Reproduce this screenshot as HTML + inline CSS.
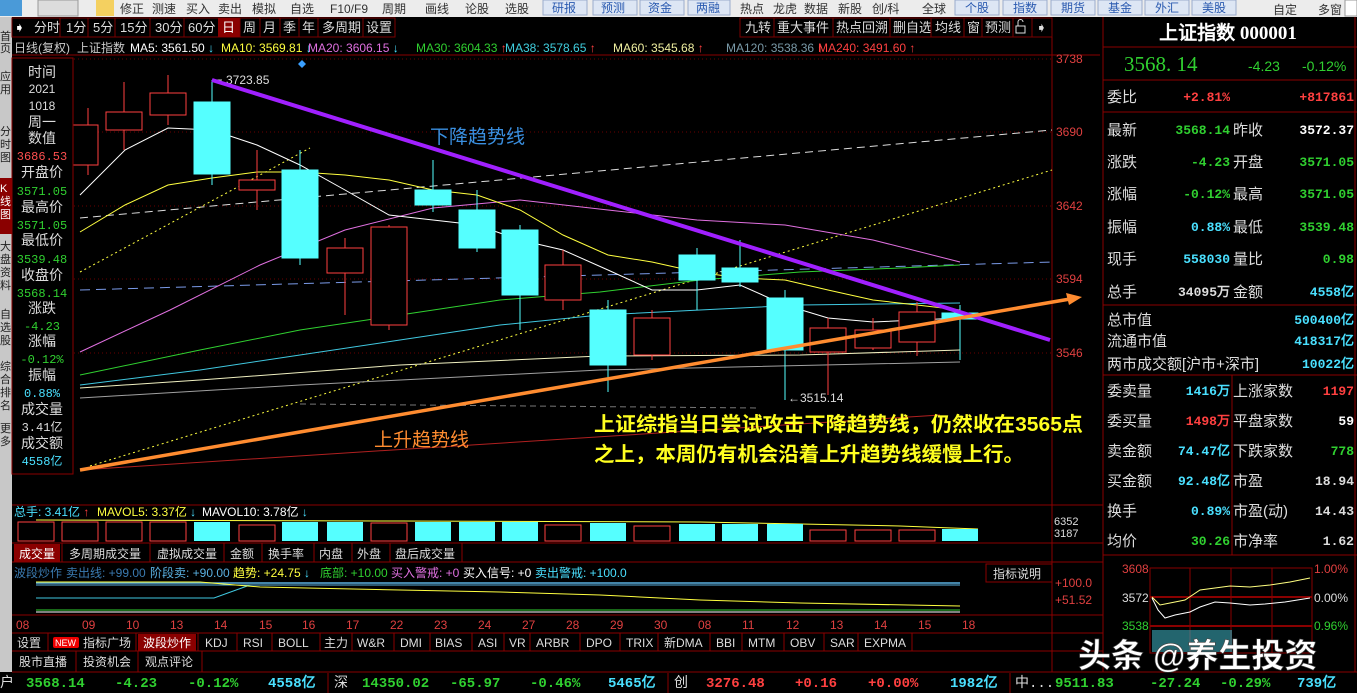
<!DOCTYPE html>
<html><head><meta charset="utf-8"><style>
html,body{margin:0;padding:0;background:#000;width:1357px;height:693px;overflow:hidden}
svg{display:block}
.m{font-family:"Liberation Mono","WenQuanYi Zen Hei",monospace}
</style></head><body>
<svg width="1357" height="693" viewBox="0 0 1357 693" xmlns="http://www.w3.org/2000/svg" font-family="Liberation Sans, WenQuanYi Zen Hei, Noto Sans CJK SC, sans-serif" font-size="12">
<!-- toolbar -->
<rect x="0" y="0" width="1357" height="17" fill="#ececec"/>
<rect x="0" y="0" width="22" height="16" fill="#4a9ad8"/>
<rect x="38" y="0" width="40" height="16" fill="#dcdcdc" stroke="#999"/>
<rect x="96" y="0" width="18" height="16" fill="#f4d060"/>
<g fill="#333" font-size="12">
<text x="120" y="13">修正</text><text x="152" y="13">测速</text><text x="186" y="13">买入</text><text x="218" y="13">卖出</text><text x="252" y="13">模拟</text><text x="290" y="13">自选</text><text x="330" y="13">F10/F9</text><text x="382" y="13">周期</text><text x="425" y="13">画线</text><text x="465" y="13">论股</text><text x="505" y="13">选股</text>
<text x="740" y="13">热点</text><text x="773" y="13">龙虎</text><text x="804" y="13">数据</text><text x="838" y="13">新股</text><text x="872" y="13">创/科</text><text x="922" y="13">全球</text><text x="1273" y="14">自定</text><text x="1318" y="14">多窗</text>
</g>
<g fill="#dde6f4" stroke="#9aaccc">
<rect x="543" y="0" width="44" height="15"/><rect x="593" y="0" width="44" height="15"/><rect x="640" y="0" width="44" height="15"/><rect x="688" y="0" width="42" height="15"/>
<rect x="955" y="0" width="44" height="15"/><rect x="1003" y="0" width="44" height="15"/><rect x="1051" y="0" width="44" height="15"/><rect x="1098" y="0" width="44" height="15"/><rect x="1145" y="0" width="44" height="15"/><rect x="1192" y="0" width="44" height="15"/>
</g>
<g fill="#2a5ab0"><text x="552" y="12">研报</text><text x="601" y="12">预测</text><text x="648" y="12">资金</text><text x="696" y="12">两融</text><text x="965" y="12">个股</text><text x="1013" y="12">指数</text><text x="1061" y="12">期货</text><text x="1108" y="12">基金</text><text x="1155" y="12">外汇</text><text x="1202" y="12">美股</text></g>
<rect x="1345" y="0" width="12" height="16" fill="#fff" stroke="#999"/>

<!-- left sidebar -->
<rect x="0" y="17" width="12" height="655" fill="#c8c8c8"/>
<rect x="0" y="178" width="12" height="56" fill="#8a0000"/>
<g font-size="11" fill="#222">
<text x="0" y="40">首</text><text x="0" y="52">页</text>
<text x="0" y="80">应</text><text x="0" y="93">用</text>
<text x="0" y="135">分</text><text x="0" y="148">时</text><text x="0" y="161">图</text>
<text x="0" y="192" fill="#fff">K</text><text x="0" y="205" fill="#fff">线</text><text x="0" y="218" fill="#fff">图</text>
<text x="0" y="250">大</text><text x="0" y="263">盘</text><text x="0" y="276">资</text><text x="0" y="289">料</text>
<text x="0" y="318">自</text><text x="0" y="331">选</text><text x="0" y="344">股</text>
<text x="0" y="370">综</text><text x="0" y="383">合</text><text x="0" y="396">排</text><text x="0" y="409">名</text>
<text x="0" y="432">更</text><text x="0" y="445">多</text>
</g>

<!-- period tabs -->
<g stroke="#7a0000" fill="none">
<rect x="12" y="18" width="383" height="19"/><rect x="740" y="18" width="312" height="19"/>
</g>
<rect x="218" y="18" width="22" height="19" fill="#8a0000"/>
<g fill="#ddd" font-size="13">
<text x="14" y="32" fill="#fff">➧</text>
<text x="34" y="32">分时</text><text x="66" y="32">1分</text><text x="93" y="32">5分</text><text x="120" y="32">15分</text><text x="155" y="32">30分</text><text x="188" y="32">60分</text><text x="222" y="32" fill="#fff">日</text><text x="243" y="32">周</text><text x="263" y="32">月</text><text x="283" y="32">季</text><text x="302" y="32">年</text><text x="322" y="32">多周期</text><text x="366" y="32">设置</text>
<text x="745" y="32">九转</text><text x="777" y="32">重大事件</text><text x="836" y="32">热点回溯</text><text x="893" y="32">删自选</text><text x="935" y="32">均线</text><text x="967" y="32">窗</text><text x="985" y="32">预测</text><text x="1036" y="32">➧</text>
</g>
<g fill="none" stroke="#ddd"><rect x="1016" y="26" width="9" height="7"/><path d="M1018 26 V22 a2.5 2.5 0 0 1 5 0"/></g>
<g stroke="#7a0000"><line x1="60" y1="18" x2="60" y2="37"/><line x1="88" y1="18" x2="88" y2="37"/><line x1="115" y1="18" x2="115" y2="37"/><line x1="150" y1="18" x2="150" y2="37"/><line x1="184" y1="18" x2="184" y2="37"/><line x1="240" y1="18" x2="240" y2="37"/><line x1="260" y1="18" x2="260" y2="37"/><line x1="280" y1="18" x2="280" y2="37"/><line x1="299" y1="18" x2="299" y2="37"/><line x1="318" y1="18" x2="318" y2="37"/><line x1="363" y1="18" x2="363" y2="37"/><line x1="774" y1="18" x2="774" y2="37"/><line x1="833" y1="18" x2="833" y2="37"/><line x1="890" y1="18" x2="890" y2="37"/><line x1="931" y1="18" x2="931" y2="37"/><line x1="964" y1="18" x2="964" y2="37"/><line x1="982" y1="18" x2="982" y2="37"/><line x1="1013" y1="18" x2="1013" y2="37"/><line x1="1032" y1="18" x2="1032" y2="37"/></g>

<!-- MA legend -->
<g font-size="12">
<text x="14" y="52" fill="#ccc">日线(复权)</text><text x="77" y="52" fill="#ccc">上证指数</text>
<text x="130" y="52" fill="#fff">MA5: 3561.50 <tspan fill="#4ae0ff">↓</tspan></text>
<text x="221" y="52" fill="#ffff40">MA10: 3569.81 <tspan fill="#4ae0ff">↓</tspan></text>
<text x="308" y="52" fill="#e070e0">MA20: 3606.15 <tspan fill="#4ae0ff">↓</tspan></text>
<text x="416" y="52" fill="#30d030">MA30: 3604.33 <tspan fill="#ff4040">↑</tspan></text>
<text x="505" y="52" fill="#40d0e0">MA38: 3578.65 <tspan fill="#ff4040">↑</tspan></text>
<text x="613" y="52" fill="#f0f0a0">MA60: 3545.68 <tspan fill="#ff4040">↑</tspan></text>
<text x="726" y="52" fill="#7a9aa8">MA120: 3538.36 <tspan fill="#ff4040">↑</tspan></text>
<text x="818" y="52" fill="#ff4040">MA240: 3491.60 ↑</text>
</g>
<polygon points="302,60 306,64 302,68 298,64" fill="#3aa0ff"/>

<!-- chart frame -->
<g stroke="#8a0000" fill="none">
<line x1="12" y1="55" x2="1100" y2="55"/>
<line x1="1052" y1="37" x2="1052" y2="672"/>
<line x1="1103" y1="17" x2="1103" y2="672"/>
<line x1="12" y1="505" x2="1103" y2="505"/>
<line x1="12" y1="543" x2="1103" y2="543"/>
<line x1="12" y1="562" x2="1103" y2="562"/>
<line x1="12" y1="615" x2="1103" y2="615"/>
<line x1="12" y1="633" x2="1103" y2="633"/>
<line x1="12" y1="651" x2="1103" y2="651"/>
<line x1="12" y1="672" x2="1357" y2="672"/>
</g>
<g stroke="#6a0000" stroke-dasharray="1,3">
<line x1="14" y1="59" x2="1052" y2="59"/><line x1="14" y1="132" x2="1052" y2="132"/><line x1="14" y1="206" x2="1052" y2="206"/><line x1="14" y1="279" x2="1052" y2="279"/><line x1="14" y1="353" x2="1052" y2="353"/>
</g>
<g fill="#e04040" font-size="12"><text x="1056" y="63">3738</text><text x="1056" y="136">3690</text><text x="1056" y="210">3642</text><text x="1056" y="283">3594</text><text x="1056" y="357">3546</text></g>

<!-- dashed trend lines -->
<line x1="80" y1="218" x2="1052" y2="130" stroke="#ddd" stroke-dasharray="8,5"/>
<line x1="80" y1="290" x2="1052" y2="262" stroke="#7a9ae8" stroke-dasharray="10,6"/>
<line x1="90" y1="466" x2="1052" y2="170" stroke="#ffff40" stroke-dasharray="2,3"/>
<line x1="80" y1="272" x2="310" y2="148" stroke="#ffff40" stroke-dasharray="2,3"/>
<line x1="300" y1="404" x2="760" y2="408" stroke="#777" stroke-dasharray="6,4"/>
<line x1="80" y1="470" x2="940" y2="415" stroke="#b02020"/>

<!-- MA lines -->
<polyline fill="none" stroke="#a0a0a0" points="80,398 300,385 600,370 960,362"/>
<polyline fill="none" stroke="#f0f0c0" points="80,388 200,380 400,365 600,356 800,355 960,350"/>
<polyline fill="none" stroke="#40c8e0" points="80,385 200,370 300,355 400,340 500,325 600,315 700,310 800,305 960,303"/>
<polyline fill="none" stroke="#30d030" points="80,375 200,350 300,330 400,315 500,300 600,292 700,280 800,272 900,268 960,265"/>
<polyline fill="none" stroke="#e070e0" points="80,352 170,310 260,265 345,230 433,208 520,200 608,210 697,220 785,225 873,240 960,262"/>
<polyline fill="none" stroke="#ffff40" points="80,232 125,205 168,185 212,178 257,172 300,172 345,175 389,180 433,190 477,195 520,210 563,235 608,255 652,262 697,272 740,278 785,280 828,290 873,300 917,305 960,310"/>
<polyline fill="none" stroke="#fff" points="80,195 125,150 168,128 212,130 257,145 300,165 345,190 389,215 433,220 477,225 520,240 563,250 608,270 652,290 697,290 740,285 785,305 828,318 873,322 917,320 960,318"/>

<!-- candles -->
<g stroke="#ff4040" fill="#000">
<line x1="88" y1="108" x2="88" y2="175"/><rect x="70" y="125" width="28" height="40"/>
<line x1="124" y1="82" x2="124" y2="150"/><rect x="106" y="112" width="36" height="18"/>
<line x1="168" y1="75" x2="168" y2="125"/><rect x="150" y="93" width="36" height="22"/>
<line x1="257" y1="150" x2="257" y2="210"/><rect x="239" y="180" width="36" height="10"/>
<line x1="345" y1="238" x2="345" y2="315"/><rect x="327" y="248" width="36" height="25"/>
<line x1="389" y1="225" x2="389" y2="330"/><rect x="371" y="227" width="36" height="98"/>
<line x1="563" y1="250" x2="563" y2="310"/><rect x="545" y="265" width="36" height="35"/>
<line x1="652" y1="310" x2="652" y2="360"/><rect x="634" y="318" width="36" height="37"/>
<line x1="828" y1="318" x2="828" y2="395"/><rect x="810" y="328" width="36" height="24"/>
<line x1="873" y1="318" x2="873" y2="350"/><rect x="855" y="330" width="36" height="18"/>
<line x1="917" y1="302" x2="917" y2="356"/><rect x="899" y="312" width="36" height="30"/>
</g>
<g stroke="#5ff" fill="#5ff">
<line x1="212" y1="80" x2="212" y2="185"/><rect x="194" y="102" width="36" height="72"/>
<line x1="300" y1="150" x2="300" y2="265"/><rect x="282" y="170" width="36" height="88"/>
<line x1="433" y1="160" x2="433" y2="212"/><rect x="415" y="190" width="36" height="15"/>
<line x1="477" y1="190" x2="477" y2="252"/><rect x="459" y="210" width="36" height="38"/>
<line x1="520" y1="225" x2="520" y2="330"/><rect x="502" y="230" width="36" height="65"/>
<line x1="608" y1="300" x2="608" y2="392"/><rect x="590" y="310" width="36" height="55"/>
<line x1="697" y1="248" x2="697" y2="310"/><rect x="679" y="255" width="36" height="25"/>
<line x1="740" y1="240" x2="740" y2="287"/><rect x="722" y="268" width="36" height="14"/>
<line x1="785" y1="290" x2="785" y2="400"/><rect x="767" y="298" width="36" height="52"/>
<line x1="960" y1="305" x2="960" y2="360"/><rect x="942" y="313" width="36" height="6"/>
</g>
<line x1="212" y1="80" x2="222" y2="80" stroke="#ccc"/>
<text x="226" y="84" fill="#ddd" font-size="12">3723.85</text>
<text x="788" y="402" fill="#ddd" font-size="12">←3515.14</text>

<!-- main trend lines -->
<line x1="212" y1="80" x2="1050" y2="340" stroke="#a020ff" stroke-width="4"/>
<line x1="80" y1="470" x2="1070" y2="299" stroke="#ff8c30" stroke-width="3.5"/>
<polygon points="1082,297 1066,293 1069,305" fill="#ff8c30"/>
<text x="430" y="143" fill="#3a8fe0" font-size="19">下降趋势线</text>
<text x="374" y="446" fill="#ff8c30" font-size="19">上升趋势线</text>
<text x="594" y="431" fill="#ffff20" font-size="20" font-weight="bold" textLength="489" lengthAdjust="spacingAndGlyphs">上证综指当日尝试攻击下降趋势线，仍然收在3565点</text>
<text x="594" y="461" fill="#ffff20" font-size="20" font-weight="bold" textLength="430" lengthAdjust="spacingAndGlyphs">之上，本周仍有机会沿着上升趋势线缓慢上行。</text>

<!-- left info box -->
<rect x="12" y="58" width="61" height="416" fill="#000" stroke="#8a0000"/>
<g font-size="14" text-anchor="middle" fill="#ddd">
<text x="42" y="77">时间</text><text x="42" y="93" font-size="12">2021</text><text x="42" y="110" font-size="12">1018</text><text x="42" y="127">周一</text><text x="42" y="143">数值</text>
<text x="42" y="160" font-size="12" fill="#ff5050" class="m">3686.53</text><text x="42" y="177">开盘价</text>
<text x="42" y="195" font-size="12" fill="#30d030" class="m">3571.05</text><text x="42" y="212">最高价</text>
<text x="42" y="229" font-size="12" fill="#30d030" class="m">3571.05</text><text x="42" y="245">最低价</text>
<text x="42" y="263" font-size="12" fill="#30d030" class="m">3539.48</text><text x="42" y="280">收盘价</text>
<text x="42" y="297" font-size="12" fill="#30d030" class="m">3568.14</text><text x="42" y="313">涨跌</text>
<text x="42" y="330" font-size="12" fill="#30d030" class="m">-4.23</text><text x="42" y="346">涨幅</text>
<text x="42" y="363" font-size="12" fill="#30d030" class="m">-0.12%</text><text x="42" y="380">振幅</text>
<text x="42" y="397" font-size="12" fill="#4ae0ff" class="m">0.88%</text><text x="42" y="414">成交量</text>
<text x="42" y="431" font-size="12" class="m">3.41亿</text><text x="42" y="448">成交额</text>
<text x="42" y="465" font-size="12" fill="#4ae0ff" class="m">4558亿</text>
</g>

<!-- volume -->
<g font-size="12"><text x="14" y="516" fill="#4ae0ff">总手: 3.41亿 <tspan fill="#ff4040">↑</tspan></text><text x="97" y="516" fill="#ffff40">MAVOL5: 3.37亿 <tspan fill="#4ae0ff">↓</tspan></text><text x="202" y="516" fill="#fff">MAVOL10: 3.78亿 <tspan fill="#4ae0ff">↓</tspan></text></g>
<polyline fill="none" stroke="#ffff40" points="36,520 400,521 700,522 900,526 978,529"/>
<g stroke="#ff4040" fill="#000">
<rect x="18" y="522" width="36" height="19"/><rect x="62" y="522" width="36" height="19"/><rect x="106" y="522" width="36" height="19"/><rect x="150" y="522" width="36" height="19"/><rect x="239" y="525" width="36" height="16"/><rect x="371" y="523" width="36" height="18"/><rect x="545" y="525" width="36" height="16"/><rect x="634" y="526" width="36" height="15"/><rect x="810" y="530" width="36" height="11"/><rect x="855" y="530" width="36" height="11"/><rect x="899" y="530" width="36" height="11"/>
</g>
<g fill="#5ff"><rect x="194" y="522" width="36" height="19"/><rect x="282" y="522" width="36" height="19"/><rect x="327" y="522" width="36" height="19"/><rect x="415" y="522" width="36" height="19"/><rect x="459" y="522" width="36" height="19"/><rect x="502" y="522" width="36" height="19"/><rect x="590" y="523" width="36" height="18"/><rect x="679" y="524" width="36" height="17"/><rect x="722" y="524" width="36" height="17"/><rect x="767" y="524" width="36" height="17"/><rect x="942" y="529" width="36" height="12"/></g>
<text x="1054" y="525" fill="#ddd" font-size="11">6352</text><text x="1054" y="537" fill="#ddd" font-size="11">3187</text>

<!-- volume tabs -->
<rect x="14" y="544" width="46" height="18" fill="#8a0000"/>
<g font-size="12" fill="#ddd"><text x="19" y="558" fill="#fff">成交量</text><text x="69" y="558">多周期成交量</text><text x="157" y="558">虚拟成交量</text><text x="230" y="558">金额</text><text x="268" y="558">换手率</text><text x="319" y="558">内盘</text><text x="357" y="558">外盘</text><text x="395" y="558">盘后成交量</text></g>
<g stroke="#8a0000"><line x1="62" y1="543" x2="62" y2="562"/><line x1="150" y1="543" x2="150" y2="562"/><line x1="224" y1="543" x2="224" y2="562"/><line x1="262" y1="543" x2="262" y2="562"/><line x1="314" y1="543" x2="314" y2="562"/><line x1="352" y1="543" x2="352" y2="562"/><line x1="390" y1="543" x2="390" y2="562"/><line x1="462" y1="543" x2="462" y2="562"/></g>

<!-- indicator -->
<g font-size="12"><text x="14" y="577" fill="#3a7ab0">波段炒作</text><text x="66" y="577" fill="#3a7ab0">卖出线: +99.00</text><text x="150" y="577" fill="#5ab0e0">阶段卖: +90.00</text><text x="233" y="577" fill="#ffff40">趋势: +24.75 <tspan fill="#4ae0ff">↓</tspan></text><text x="320" y="577" fill="#30d030">底部: +10.00</text><text x="391" y="577" fill="#e070e0">买入警戒: +0</text><text x="463" y="577" fill="#fff">买入信号: +0</text><text x="535" y="577" fill="#4ae0ff">卖出警戒: +100.0</text></g>
<rect x="986" y="564" width="66" height="18" fill="#000" stroke="#8a0000"/><text x="993" y="578" fill="#ddd" font-size="12">指标说明</text>
<line x1="36" y1="583" x2="960" y2="583" stroke="#5ab0e0" stroke-width="1.5"/>
<line x1="36" y1="585" x2="960" y2="585" stroke="#5ab0e0"/>
<polyline fill="none" stroke="#40c8e0" points="36,598 214,598 250,585"/>
<polyline fill="none" stroke="#ffff40" points="36,582 200,582 260,587 400,590 500,592 600,595 700,600 800,603 960,606"/>
<line x1="36" y1="610" x2="960" y2="610" stroke="#30d030"/>
<line x1="36" y1="612" x2="960" y2="612" stroke="#fff"/>
<g fill="#e04040" font-size="12"><text x="1055" y="587">+100.0</text><text x="1055" y="604">+51.52</text></g>

<!-- dates -->
<g fill="#e04040" font-size="12"><text x="16" y="629">08</text><text x="82" y="629">09</text><text x="126" y="629">10</text><text x="170" y="629">13</text><text x="214" y="629">14</text><text x="259" y="629">15</text><text x="302" y="629">16</text><text x="346" y="629">17</text><text x="390" y="629">22</text><text x="434" y="629">23</text><text x="478" y="629">24</text><text x="522" y="629">27</text><text x="566" y="629">28</text><text x="610" y="629">29</text><text x="654" y="629">30</text><text x="698" y="629">08</text><text x="742" y="629">11</text><text x="786" y="629">12</text><text x="830" y="629">13</text><text x="874" y="629">14</text><text x="918" y="629">15</text><text x="962" y="629">18</text></g>

<!-- bottom tabs -->
<rect x="138" y="634" width="58" height="17" fill="#8a0000"/>
<rect x="53" y="637" width="26" height="11" fill="#e00" rx="2"/><text x="55" y="646" fill="#fff" font-size="9">NEW</text>
<g font-size="12" fill="#ddd"><text x="17" y="647">设置</text><text x="83" y="647">指标广场</text><text x="143" y="647" fill="#fff">波段炒作</text><text x="205" y="647">KDJ</text><text x="243" y="647">RSI</text><text x="278" y="647">BOLL</text><text x="324" y="647">主力</text><text x="357" y="647">W&amp;R</text><text x="400" y="647">DMI</text><text x="435" y="647">BIAS</text><text x="478" y="647">ASI</text><text x="509" y="647">VR</text><text x="536" y="647">ARBR</text><text x="586" y="647">DPO</text><text x="626" y="647">TRIX</text><text x="664" y="647">新DMA</text><text x="716" y="647">BBI</text><text x="748" y="647">MTM</text><text x="790" y="647">OBV</text><text x="830" y="647">SAR</text><text x="864" y="647">EXPMA</text>
<text x="19" y="666">股市直播</text><text x="83" y="666">投资机会</text><text x="145" y="666">观点评论</text></g>
<g stroke="#8a0000"><line x1="48" y1="633" x2="48" y2="651"/><line x1="136" y1="633" x2="136" y2="651"/><line x1="198" y1="633" x2="198" y2="651"/><line x1="237" y1="633" x2="237" y2="651"/><line x1="272" y1="633" x2="272" y2="651"/><line x1="320" y1="633" x2="320" y2="651"/><line x1="352" y1="633" x2="352" y2="651"/><line x1="394" y1="633" x2="394" y2="651"/><line x1="430" y1="633" x2="430" y2="651"/><line x1="472" y1="633" x2="472" y2="651"/><line x1="504" y1="633" x2="504" y2="651"/><line x1="530" y1="633" x2="530" y2="651"/><line x1="580" y1="633" x2="580" y2="651"/><line x1="620" y1="633" x2="620" y2="651"/><line x1="658" y1="633" x2="658" y2="651"/><line x1="710" y1="633" x2="710" y2="651"/><line x1="742" y1="633" x2="742" y2="651"/><line x1="784" y1="633" x2="784" y2="651"/><line x1="824" y1="633" x2="824" y2="651"/><line x1="858" y1="633" x2="858" y2="651"/><line x1="912" y1="633" x2="912" y2="651"/><line x1="76" y1="651" x2="76" y2="672"/><line x1="138" y1="651" x2="138" y2="672"/><line x1="202" y1="651" x2="202" y2="672"/></g>

<!-- bottom ticker -->
<g font-size="14" class="m" font-weight="bold">
<text x="0" y="687" fill="#ddd" font-weight="normal">户</text>
<text x="26" y="687" fill="#30d030">3568.14</text><text x="115" y="687" fill="#30d030">-4.23</text><text x="188" y="687" fill="#30d030">-0.12%</text><text x="268" y="687" fill="#4ae0ff">4558亿</text>
<text x="334" y="687" fill="#ddd" font-weight="normal">深</text><text x="362" y="687" fill="#30d030">14350.02</text><text x="450" y="687" fill="#30d030">-65.97</text><text x="530" y="687" fill="#30d030">-0.46%</text><text x="608" y="687" fill="#4ae0ff">5465亿</text>
<text x="674" y="687" fill="#ddd" font-weight="normal">创</text><text x="706" y="687" fill="#ff4040">3276.48</text><text x="795" y="687" fill="#ff4040">+0.16</text><text x="868" y="687" fill="#ff4040">+0.00%</text><text x="950" y="687" fill="#4ae0ff">1982亿</text>
<text x="1015" y="687" fill="#ddd" font-weight="normal">中...</text><text x="1055" y="687" fill="#30d030">9511.83</text><text x="1150" y="687" fill="#30d030">-27.24</text><text x="1220" y="687" fill="#30d030">-0.29%</text><text x="1297" y="687" fill="#4ae0ff">739亿</text>
</g>
<g stroke="#8a0000"><line x1="328" y1="673" x2="328" y2="693"/><line x1="668" y1="673" x2="668" y2="693"/><line x1="1010" y1="673" x2="1010" y2="693"/></g>

<!-- right panel -->
<text x="1228" y="39" fill="#fff" font-size="19" font-weight="bold" text-anchor="middle" font-family="Liberation Serif, WenQuanYi Zen Hei, serif">上证指数 000001</text>
<line x1="1103" y1="47" x2="1357" y2="47" stroke="#8a0000"/>
<text x="1124" y="71" fill="#30d030" font-size="21" font-family="Liberation Serif, serif">3568. 14</text>
<text x="1248" y="71" fill="#30d030" font-size="14">-4.23</text><text x="1302" y="71" fill="#30d030" font-size="14">-0.12%</text>
<g stroke="#8a0000"><line x1="1103" y1="80" x2="1357" y2="80"/><line x1="1103" y1="112" x2="1357" y2="112"/><line x1="1103" y1="305" x2="1357" y2="305"/><line x1="1103" y1="375" x2="1357" y2="375"/><line x1="1103" y1="555" x2="1357" y2="555"/><line x1="1232" y1="375" x2="1232" y2="555"/><line x1="1355" y1="17" x2="1355" y2="672"/></g>
<g font-size="15" fill="#ddd"><text x="1107" y="102">委比</text><text x="1107" y="135">最新</text><text x="1233" y="135">昨收</text><text x="1107" y="167">涨跌</text><text x="1233" y="167">开盘</text><text x="1107" y="199">涨幅</text><text x="1233" y="199">最高</text><text x="1107" y="232">振幅</text><text x="1233" y="232">最低</text><text x="1107" y="264">现手</text><text x="1233" y="264">量比</text><text x="1107" y="297">总手</text><text x="1233" y="297">金额</text>
<text x="1107" y="325">总市值</text><text x="1107" y="346">流通市值</text><text x="1107" y="369">两市成交额[沪市+深市]</text>
<text x="1107" y="396">委卖量</text><text x="1233" y="396">上涨家数</text><text x="1107" y="426">委买量</text><text x="1233" y="426">平盘家数</text><text x="1107" y="456">卖金额</text><text x="1233" y="456">下跌家数</text><text x="1107" y="486">买金额</text><text x="1233" y="486">市盈</text><text x="1107" y="516">换手</text><text x="1233" y="516">市盈(动)</text><text x="1107" y="546">均价</text><text x="1233" y="546">市净率</text></g>
<g font-size="13" font-weight="bold" text-anchor="end" class="m">
<text x="1230" y="101" fill="#ff4040">+2.81%</text><text x="1354" y="101" fill="#ff4040">+817861</text>
<text x="1230" y="134" fill="#30d030">3568.14</text><text x="1354" y="134" fill="#fff">3572.37</text>
<text x="1230" y="166" fill="#30d030">-4.23</text><text x="1354" y="166" fill="#30d030">3571.05</text>
<text x="1230" y="198" fill="#30d030">-0.12%</text><text x="1354" y="198" fill="#30d030">3571.05</text>
<text x="1230" y="231" fill="#4ae0ff">0.88%</text><text x="1354" y="231" fill="#30d030">3539.48</text>
<text x="1230" y="263" fill="#4ae0ff">558030</text><text x="1354" y="263" fill="#30d030">0.98</text>
<text x="1230" y="296" fill="#ddd">34095万</text><text x="1354" y="296" fill="#4ae0ff">4558亿</text>
<text x="1354" y="324" fill="#4ae0ff">500400亿</text><text x="1354" y="345" fill="#4ae0ff">418317亿</text><text x="1354" y="368" fill="#4ae0ff">10022亿</text>
<text x="1230" y="395" fill="#4ae0ff">1416万</text><text x="1354" y="395" fill="#ff4040">1197</text>
<text x="1230" y="425" fill="#ff4040">1498万</text><text x="1354" y="425" fill="#fff">59</text>
<text x="1230" y="455" fill="#4ae0ff">74.47亿</text><text x="1354" y="455" fill="#30d030">778</text>
<text x="1230" y="485" fill="#4ae0ff">92.48亿</text><text x="1354" y="485" fill="#ddd">18.94</text>
<text x="1230" y="515" fill="#4ae0ff">0.89%</text><text x="1354" y="515" fill="#ddd">14.43</text>
<text x="1230" y="545" fill="#30d030">30.26</text><text x="1354" y="545" fill="#ddd">1.62</text>
</g>
<!-- mini chart -->
<rect x="1150" y="568" width="162" height="85" fill="none" stroke="#8a0000"/>
<g stroke="#8a0000"><line x1="1150" y1="597" x2="1312" y2="597" stroke-width="2"/><line x1="1150" y1="626" x2="1312" y2="626" stroke-width="2"/><line x1="1190" y1="568" x2="1190" y2="653"/><line x1="1231" y1="568" x2="1231" y2="653"/><line x1="1272" y1="568" x2="1272" y2="653"/></g>
<polyline fill="none" stroke="#ffff80" points="1152,597 1160,605 1170,603 1185,600 1200,590 1215,588 1230,586 1250,587 1270,585 1290,582 1310,578"/>
<polyline fill="none" stroke="#fff" points="1152,598 1158,610 1165,618 1175,615 1190,612 1200,607 1215,602 1230,603 1250,605 1265,604 1285,602 1310,598"/>
<g font-size="12"><text x="1122" y="573" fill="#e04040">3608</text><text x="1122" y="602" fill="#ddd">3572</text><text x="1122" y="630" fill="#30d030">3538</text><text x="1314" y="573" fill="#e04040">1.00%</text><text x="1314" y="602" fill="#ddd">0.00%</text><text x="1314" y="630" fill="#30d030">0.96%</text></g>
<rect x="1152" y="630" width="80" height="22" fill="#3aa8b8" opacity="0.6"/>
<!-- watermark -->
<text x="1078" y="667" fill="#fff" font-size="33" font-weight="bold" stroke="#444" stroke-width="0.6">头条 @养生投资</text>
</svg>
</body></html>
